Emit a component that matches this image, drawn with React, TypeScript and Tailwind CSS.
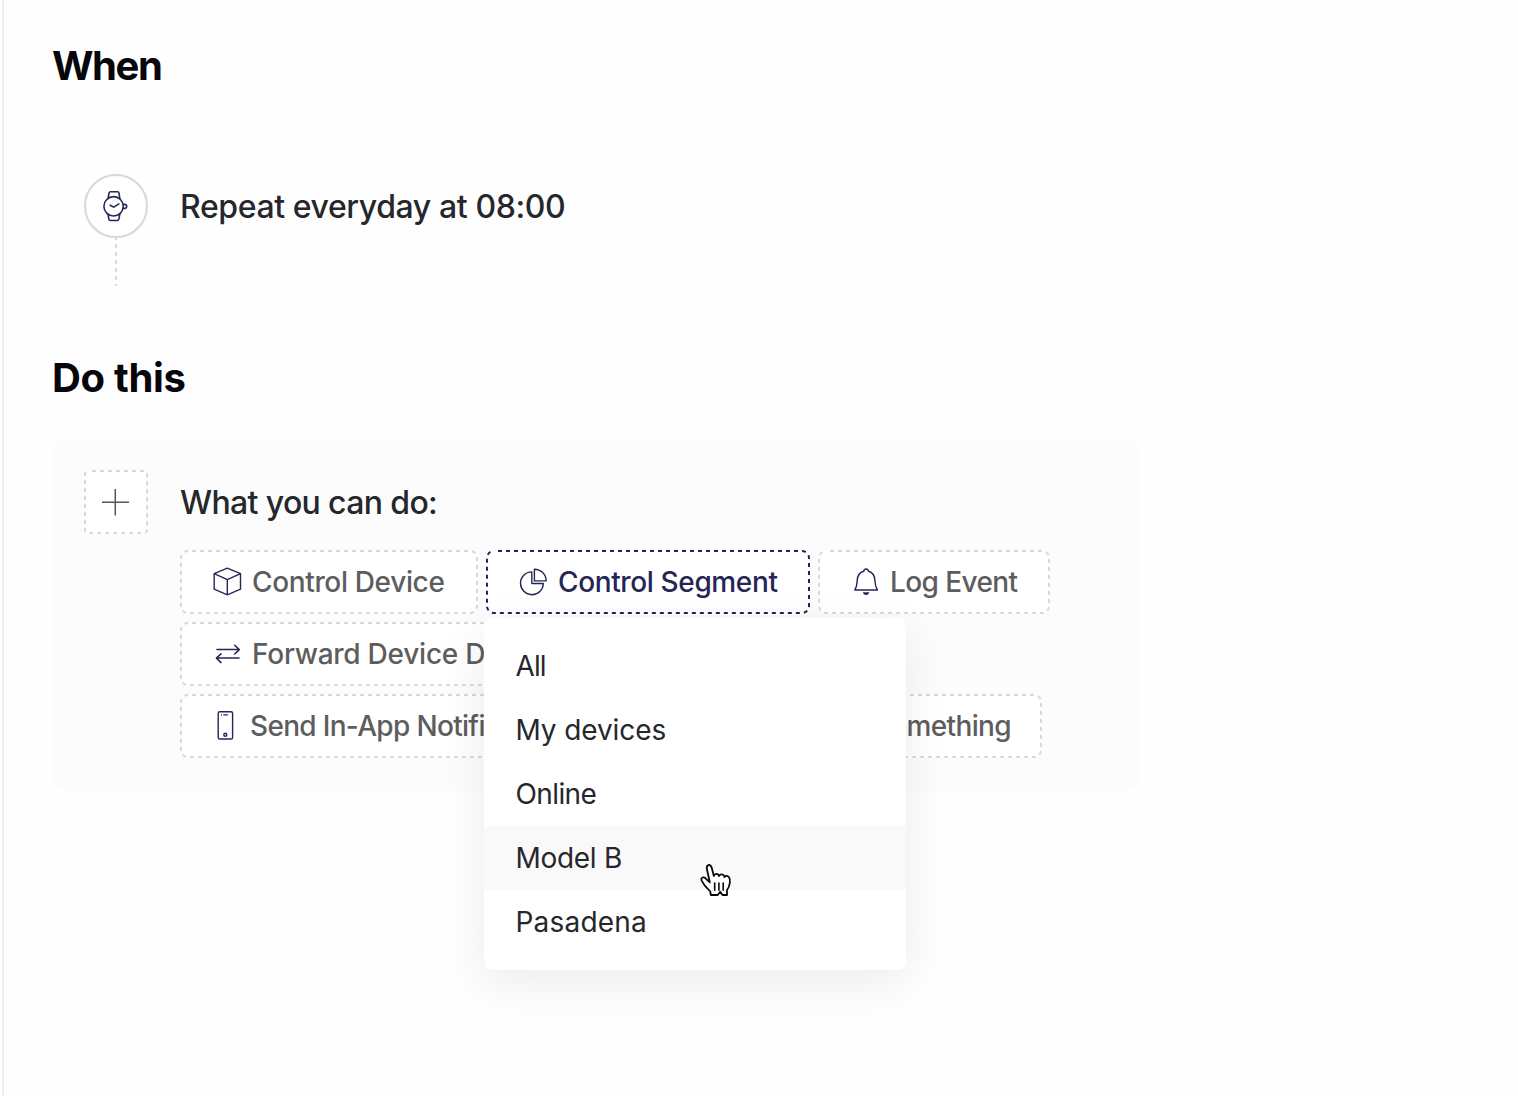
import type { ReactNode } from "react";

function DashedFrame({ color = "#d8d8d8", radius = 7 }: { color?: string; radius?: number }) {
  return (
    <svg className="pointer-events-none absolute inset-0 h-full w-full overflow-visible" fill="none">
      <rect
        x="1"
        y="1"
        rx={radius}
        stroke={color}
        strokeWidth="2"
        strokeDasharray="4 4"
        strokeDashoffset="4"
        className="h-[calc(100%-2px)] w-[calc(100%-2px)]"
      />
    </svg>
  );
}

function WatchIcon() {
  return (
    <svg width="32" height="32" viewBox="0 0 32 32" fill="none" stroke="#252657" strokeWidth="1.6" strokeLinejoin="round" strokeLinecap="round">
      <circle cx="13.6" cy="16.3" r="9.7" />
      <path d="M8 8.4 9 3.2Q9.3 1.8 10.5 1.8H17.5Q18.7 1.8 19 3.2L19.8 8.4M8 24.2 8.8 29Q9.1 30.5 10.5 30.5H17.3Q18.5 30.5 18.9 29L19.8 24.2" />
      <path d="M10.2 15.2 13.7 17.1 18.9 13.9" />
      <path d="M23.3 14.4H25Q26.8 14.8 26.8 16.4T25 18.4H23.3" />
    </svg>
  );
}

function CubeIcon() {
  return (
    <svg width="32" height="32" viewBox="0 0 32 32" fill="none" stroke="#252657" strokeWidth="1.4" strokeLinejoin="round">
      <path d="M15.3 2.2 28.5 7.7V23.2L15.3 28.8 2.2 23.2V7.7ZM2.2 7.7 15.3 13.6 28.5 7.7M15.3 13.6V28.8" />
    </svg>
  );
}

function PieIcon() {
  return (
    <svg width="32" height="32" viewBox="0 0 32 32" fill="none" stroke="#252657" strokeWidth="1.4" strokeLinejoin="round">
      <path d="M13.8 5.9A11.4 11.4 0 1 0 25.3 17.5H13.8Z" />
      <path d="M16.4 3.2A11.8 11.8 0 0 1 28.2 14.9H16.4Z" />
    </svg>
  );
}

function BellIcon() {
  return (
    <svg width="32" height="32" viewBox="0 0 32 32" fill="none" stroke="#252657" strokeWidth="1.4" strokeLinejoin="round">
      <path d="M4.8 24C6.4 21.5 7 19.5 7.2 14.5 7.4 9.5 9.6 6.4 13.8 5.3Q14 3 16.1 3T18.4 5.3C22.6 6.4 24.7 9.5 24.9 14.5 25.1 19.5 25.8 21.5 27.5 24Z" />
      <path d="M13 26.3H19.2Q18.8 29 16.1 29T13 26.3Z" fill="#252657" stroke="none" />
    </svg>
  );
}

function SwapIcon() {
  return (
    <svg width="32" height="32" viewBox="0 0 32 32" fill="none" stroke="#252657" strokeWidth="1.5" strokeLinejoin="round" strokeLinecap="round">
      <path d="M5 11.6H27.3M22.7 7.3 27.3 11.6 22.7 16M27 20.1H4.7M9 15.9 4.4 20.1 9 24.6" />
    </svg>
  );
}

function PhoneIcon() {
  return (
    <svg width="32" height="32" viewBox="0 0 32 32" fill="none" stroke="#252657" strokeWidth="1.4">
      <rect x="6.2" y="1.8" width="14.4" height="27.2" rx="1.6" />
      <path d="M9 4.9H10M11.3 4.9H15.8" />
      <circle cx="13.3" cy="24.8" r="1.5" />
    </svg>
  );
}

function HandCursor() {
  return (
    <svg width="34" height="36" viewBox="0 0 34 36" fill="#fff" stroke="#09090f" strokeWidth="1.8" strokeLinejoin="round" strokeLinecap="round">
      <path d="M9.8 20.3 6.9 7Q6.2 3.8 8.3 3.1 10.7 2.5 11.8 6L13.8 14Q15 11.2 17.4 12.1 18.7 12.6 19 14 20.5 11.5 23 12.8 24.1 13.4 24.4 15 27 12.8 29 15.3 30.4 17 29.8 21 29.3 25 27 28V33H22.5L20.2 29.8 17.7 33H10.8L10.3 29.5 4.8 23.7 1.7 18.6Q0.7 16.3 2.6 15.5 4.7 14.7 6.6 17.4Z" />
      <path d="M14.7 21V28.3M18.9 21V28.3M23.2 21V28.3" fill="none" strokeWidth="1.6" />
    </svg>
  );
}

interface ActionProps {
  icon?: ReactNode;
  label: string;
  frame: string;
  text: string;
  active?: boolean;
}

function ActionButton({ icon, label, frame, text, active = false }: ActionProps) {
  return (
    <button className={`relative flex h-16 shrink-0 items-center rounded-lg bg-white pl-8 text-left ${frame}`}>
      <DashedFrame color={active ? "#252657" : "#d8d8d8"} />
      {icon}
      <span className={`whitespace-nowrap text-[28px] leading-[64px] font-medium ${active ? "text-[#252657]" : "text-[#5d5d60]"} ${text}`}>
        {label}
      </span>
    </button>
  );
}

const segments = [
  { label: "All", tracking: "tracking-[-0.9px]" },
  { label: "My devices", tracking: "tracking-[-0.1px]" },
  { label: "Online", tracking: "tracking-[-0.6px]" },
  { label: "Model B", tracking: "tracking-[-0.3px]", hovered: true },
  { label: "Pasadena", tracking: "tracking-[0.2px]" },
];

function SegmentMenu() {
  return (
    <ul className="absolute top-[68px] left-[-2px] z-10 h-[352px] w-[422px] rounded-lg bg-white py-4 shadow-[0_12px_48px_rgba(0,0,0,0.075)]">
      {segments.map((s) => (
        <li
          key={s.label}
          className={`relative flex h-16 items-center pl-[31.5px] text-[28px] text-[#26272c] ${s.tracking} ${s.hovered ? "bg-[#f9f9f9]" : ""}`}
        >
          {s.label}
          {s.hovered && (
            <span className="absolute top-[36px] left-[216px]">
              <HandCursor />
            </span>
          )}
        </li>
      ))}
    </ul>
  );
}

export default function App() {
  return (
    <main className="flex h-[1096px] w-full overflow-hidden bg-[#fefefe] pl-[2px] font-['Inter',sans-serif]">
      <div className="w-full border-l-2 border-[#efefef] pl-12">
        <h1 className="mt-[36px] h-[60px] text-[40px] leading-[60px] font-bold tracking-[-1.4px] text-[#06060b]">When</h1>

        <section className="mt-[78px] flex pl-8">
          <div className="flex w-16 flex-col items-center">
            <div className="flex size-16 items-center justify-center rounded-full border-2 border-[#d8d8d8] bg-white">
              <WatchIcon />
            </div>
            <svg width="2" height="48" className="block">
              <path d="M1 0V48" stroke="#d8d8d8" strokeWidth="2" strokeDasharray="4 4" strokeDashoffset="2" />
            </svg>
          </div>
          <p className="ml-8 h-16 text-[32px] leading-[66px] font-medium tracking-[-0.4px] text-[#26272c]">Repeat everyday at 08:00</p>
        </section>

        <h1 className="mt-[62px] h-[60px] text-[40px] leading-[60px] font-bold tracking-[-0.3px] text-[#06060b]">Do this</h1>

        <section className="mt-[30px] flex h-[352px] w-[1088px] rounded-2xl bg-[#fcfcfc] pt-8 pl-8">
          <button className="relative flex size-16 shrink-0 items-center justify-center rounded bg-white">
            <DashedFrame radius={3} />
            <svg width="64" height="64" fill="none" stroke="#55555a" strokeWidth="1.5">
              <path d="M18 32.2H45M31.3 19V45.5" />
            </svg>
          </button>
          <div className="ml-8">
            <p className="h-20 text-[32px] leading-[66px] font-medium tracking-[-0.64px] text-[#26272c]">What you can do:</p>
            <div className="flex flex-col gap-2">
              <div className="flex gap-2">
                <ActionButton icon={<CubeIcon />} label="Control Device" frame="w-[298px]" text="ml-2 tracking-[-0.35px]" />
                <div className="relative">
                  <ActionButton icon={<PieIcon />} label="Control Segment" frame="w-[324px]" text="ml-2 tracking-[-0.37px]" active />
                  <SegmentMenu />
                </div>
                <ActionButton icon={<BellIcon />} label="Log Event" frame="w-[232px]" text="ml-2 tracking-[-0.6px]" />
              </div>
              <ActionButton icon={<SwapIcon />} label="Forward Device Data" frame="w-[362px]" text="ml-2 tracking-[-0.25px]" />
              <div className="flex gap-2">
                <ActionButton icon={<PhoneIcon />} label="Send In-App Notification" frame="w-[430px]" text="ml-1.5 tracking-[-0.68px]" />
                <ActionButton label="Say Something" frame="w-[424px] justify-end pr-[31px]" text="tracking-[-0.65px]" />
              </div>
            </div>
          </div>
        </section>
      </div>
    </main>
  );
}
